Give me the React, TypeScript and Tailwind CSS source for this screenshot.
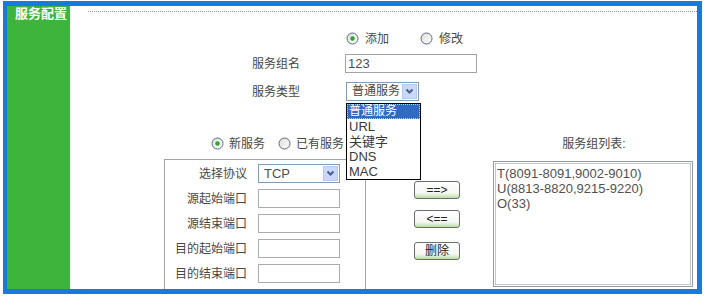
import React from 'react';

const FONT = "font-['Liberation_Sans','Noto_Sans_CJK_SC',sans-serif]";

function Radio({ checked }: { checked?: boolean }) {
  return (
    <svg width="13" height="13" viewBox="0 0 13 13" className="shrink-0">
      <defs>
        <linearGradient id="radioFill" x1="0" y1="0" x2="1" y2="1">
          <stop offset="0" stopColor="#dcdcd6" />
          <stop offset="1" stopColor="#ffffff" />
        </linearGradient>
      </defs>
      <circle cx="6.5" cy="6.5" r="5.5" fill="url(#radioFill)" stroke="#55698a" strokeWidth="1" />
      {checked && <circle cx="6.5" cy="6.5" r="2.2" fill="#2ea52e" />}
    </svg>
  );
}

function Chevron() {
  return (
    <svg width="9" height="7" viewBox="0 0 9 7">
      <path d="M1.5 1.5 L4.5 4.5 L7.5 1.5" stroke="#4a5f86" strokeWidth="2" fill="none" />
    </svg>
  );
}

function Select({ value, className }: { value: string; className: string }) {
  return (
    <div className={`flex h-[19px] items-center border border-[#7f9db9] bg-white ${className}`}>
      <span className="flex-1 whitespace-nowrap pl-[5px] leading-[17px]">{value}</span>
      <span className="mr-px flex h-[15px] w-[15px] items-center justify-center border border-[#b4c8f0] bg-[#c8d8f8]">
        <Chevron />
      </span>
    </div>
  );
}

function Button({ label }: { label: string }) {
  return (
    <div className="flex h-[18px] w-[46px] items-center justify-center rounded-[3px] border border-[#6d6d6d] bg-[linear-gradient(to_bottom,#ffffff_0%,#f6f6f2_70%,#b6dea0_100%)] text-[12px] leading-none text-[#222]">
      {label}
    </div>
  );
}

const PORT_ROWS = ['源起始端口', '源结束端口', '目的起始端口', '目的结束端口'];
const OPTIONS = ['普通服务', 'URL', '关键字', 'DNS', 'MAC'];
const GROUPS = ['T(8091-8091,9002-9010)', 'U(8813-8820,9215-9220)', 'O(33)'];

export default function App() {
  return (
    <div className={`h-[296px] w-[704px] bg-white pl-[3px] pt-[1px] text-[12px] text-[#474747] ${FONT}`}>
      <div className="flex h-[293px] w-[699px] overflow-hidden border-[5px] border-l-4 border-[#1a7ad8]">
        <div className="w-[63px] shrink-0 bg-[#3db53d] pl-[8px] text-[13px] font-bold leading-[16px] text-white">
          服务配置
        </div>

        <div className="flex min-w-0 flex-1 flex-col">
          <div className="ml-[18px] mt-[5px] border-t border-dotted border-[#8a949e]" />

          {/* add / modify */}
          <div className="ml-[276px] mt-[19px] flex h-[15px] items-center">
            <Radio checked />
            <span className="ml-[6px]">添加</span>
            <span className="ml-[31px]"><Radio /></span>
            <span className="ml-[6px]">修改</span>
          </div>

          {/* group name */}
          <div className="mt-[8px] flex h-[19px] items-center">
            <span className="ml-[182px] w-[93px]">服务组名</span>
            <div className="flex h-[19px] w-[132px] items-center border border-[#a0a4aa] bg-white pl-[2px] text-[13px] text-[#505050]">
              123
            </div>
          </div>

          {/* service type */}
          <div className="mt-[9px] flex h-[19px] items-center">
            <span className="ml-[182px] w-[94px]">服务类型</span>
            <div className="relative">
              <Select value="普通服务" className="w-[73px]" />
              <div className="absolute left-0 top-[21px] z-10 w-[75px] border border-black bg-white">
                {OPTIONS.map((o, i) => (
                  <div
                    key={o}
                    className={
                      i === 0
                        ? 'h-[15px] border border-dotted border-[#e6d49a] bg-[#316ac5] pl-px leading-[13px] text-white'
                        : 'h-[15px] pl-[2px] text-[13px] leading-[15px] text-[#3a3a3a]'
                    }
                  >
                    {o}
                  </div>
                ))}
              </div>
            </div>
          </div>

          {/* lower section */}
          <div className="ml-[94px] mt-[35px] flex">
            <div className="w-[202px] shrink-0">
              <div className="flex h-[15px] items-center pl-[47px]">
                <Radio checked />
                <span className="ml-[5px] w-[36px] whitespace-nowrap">新服务</span>
                <span className="ml-[13px]"><Radio /></span>
                <span className="ml-[5px] whitespace-nowrap">已有服务</span>
              </div>
              <div className="mt-[8px] flex h-[160px] flex-col gap-[6px] border border-b-0 border-[#a4a4a4] pt-[4px]">
                <div className="flex h-[19px] items-center">
                  <span className="w-[82px] text-right">选择协议</span>
                  <Select value="TCP" className="ml-[11px] w-[82px] text-[13px] text-[#505050]" />
                </div>
                {PORT_ROWS.map((r) => (
                  <div key={r} className="flex h-[19px] items-center">
                    <span className="w-[82px] text-right">{r}</span>
                    <div className="ml-[11px] h-[19px] w-[82px] border border-[#a8acb2] bg-white" />
                  </div>
                ))}
              </div>
            </div>

            <div className="flex w-[127px] shrink-0 flex-col pl-[48px]">
              <div className="mt-[45px]"><Button label="==>" /></div>
              <div className="mt-[11px]"><Button label="<==" /></div>
              <div className="mt-[14px]"><Button label="删除" /></div>
            </div>

            <div className="w-[200px] shrink-0">
              <div className="flex h-[15px] items-center justify-center pl-[2px]">服务组列表:</div>
              <div className="mt-[10px] h-[126px] border border-[#8e9aa6] p-px">
                <div className="h-full border border-[#c0c6cc] bg-white pl-[1px] pt-[2px] text-[13px] leading-[15px] text-[#505050]">
                  {GROUPS.map((g) => (
                    <div key={g}>{g}</div>
                  ))}
                </div>
              </div>
            </div>
          </div>
        </div>
      </div>
    </div>
  );
}
